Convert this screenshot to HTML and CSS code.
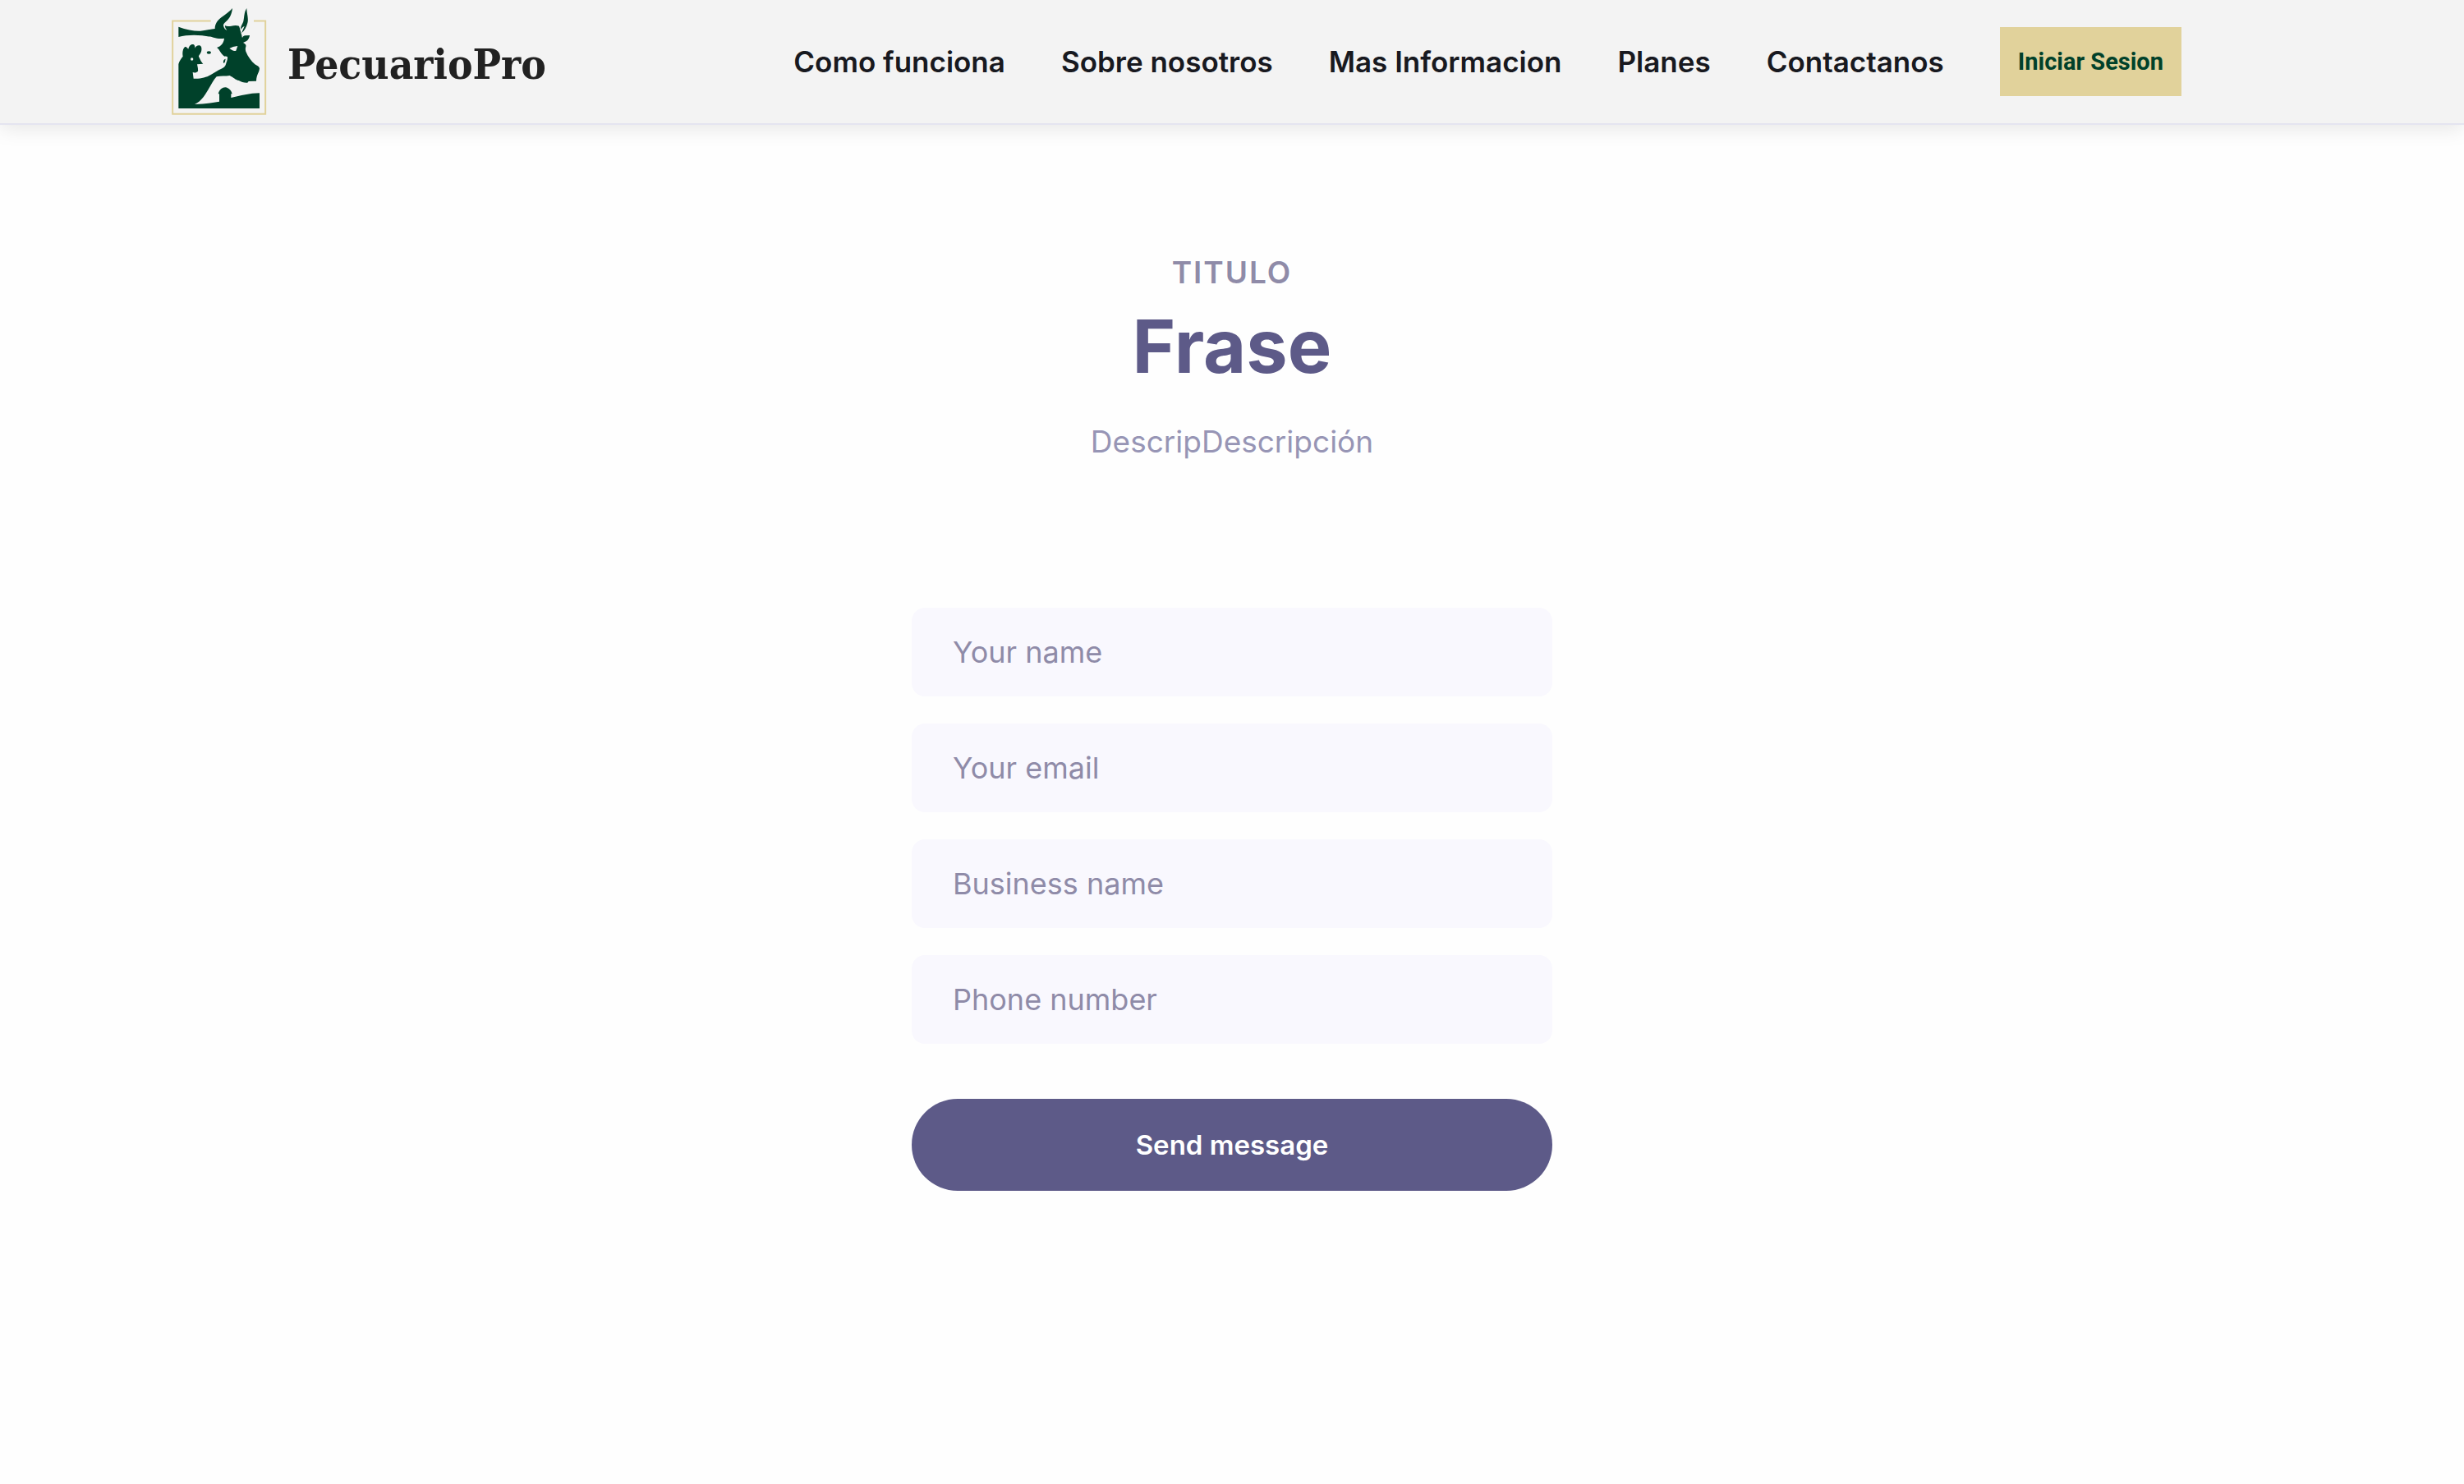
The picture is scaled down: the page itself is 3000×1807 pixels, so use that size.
FILE: index.html
```html
<!DOCTYPE html>
<html lang="es">
<head>
<meta charset="utf-8">
<meta name="viewport" content="width=device-width, initial-scale=1">
<title>PecuarioPro</title>
<link rel="stylesheet" href="styles.css">
</head>
<body>
<header class="header">
  <a class="brand" href="#">
    <svg class="brand-mark" viewBox="54 24 354 402" aria-hidden="true">
      <path d="M200 76.500H60.500V416.500H399.500V76.500H357" fill="none" stroke="#e1d29b" stroke-width="6"/>
      <g fill="#00412a">
        <path d="M82 98C112 109 140 114 162 113C184 112 200 106 215 105C215 88 223 76 238 64C254 52 268 43 279 30C276 55 268 68 257 77C249 84 245 89 246 94C248 104 254 110 259 110C255 105 251 99 252 93C258 97 267 97 275 95C285 92 296 92 303 95C307 105 309 117 312 126C314 130 313 134 315 138C318 132 322 129 327 130L342 129C341 139 335 150 324 153L318 156C325 160 330 163 328 170C326 176 326 182 328 188C336 208 348 223 361 235C370 240 377 243 378 250C377 265 367 272 366 296L338 297L334 302C323 303 310 299 302 294C290 292 283 283 269 276C254 279 237 276 221 280C206 297 196 320 181 343C171 359 157 375 141 381C173 380 205 376 231 371V343H227C231 327 242 319 253 319C266 321 275 330 278 343H274V357C309 350 342 340 378 340V396H82V234C85 222 93 212 98 206C95 194 98 176 106 171C111 169 115 177 118 179C120 167 128 160 136 162C142 164 142 171 142 176C145 168 154 163 162 167C168 171 167 186 163 193C160 200 155 203 156 207C161 214 162 224 172 233L150 235C152 245 154 252 153 260C148 266 140 266 134 264L137 287C161 289 185 282 199 274L224 259C238 250 250 250 255 235C257 226 262 218 261 208C258 206 255 205 250 206C242 200 238 195 235 190C231 183 228 178 222 174C237 169 247 158 249 140C235 143 222 140 210 137C166 126 119 125 82 135Z"/>
        <path d="M331 30C331 49 339 70 334 84C330 100 323 112 312 121C316 111 320 103 323 95C316 99 312 103 310 108C307 97 316 89 319 78C323 60 321 45 331 30Z"/>
        <ellipse cx="193" cy="192" rx="8" ry="5"/>
        <path d="M247 231C244 225 247 216 254 215C252 222 253 228 247 231Z"/>
      </g>
      <path d="M268 177C277 173 285 169 298 168L292 185C283 188 276 182 268 177Z" fill="#f3f3f3"/>
      <circle cx="131" cy="216" r="5" fill="#f3f3f3"/>
    </svg>
    <span class="brand-name">PecuarioPro</span>
  </a>
  <nav class="nav" aria-label="Principal">
    <a class="nav-link" href="#">Como funciona</a>
    <a class="nav-link" href="#">Sobre nosotros</a>
    <a class="nav-link" href="#">Mas Informacion</a>
    <a class="nav-link" href="#">Planes</a>
    <a class="nav-link" href="#">Contactanos</a>
    <button class="login" type="button">Iniciar Sesion</button>
  </nav>
</header>
<main class="contact">
  <p class="eyebrow">TITULO</p>
  <h1 class="title">Frase</h1>
  <p class="lead">DescripDescripción</p>
  <form class="form">
    <input class="field" type="text" name="name" placeholder="Your name" aria-label="Your name">
    <input class="field" type="email" name="email" placeholder="Your email" aria-label="Your email">
    <input class="field" type="text" name="business" placeholder="Business name" aria-label="Business name">
    <input class="field" type="tel" name="phone" placeholder="Phone number" aria-label="Phone number">
    <button class="send" type="submit">Send message</button>
  </form>
</main>
</body>
</html>
```
FILE: styles.css
```css
* {
  box-sizing: border-box;
}

body {
  margin: 0;
  background: #fefefe;
  font-family: Inter, "Open Sans", sans-serif;
}

.header {
  display: flex;
  align-items: center;
  justify-content: space-between;
  padding: 8px 344px 8px 208px;
  background: #f3f3f3;
  border-bottom: 2px solid #e4e4f0;
  box-shadow: 0 4px 24px rgba(0, 0, 0, 0.1);
}

.brand {
  display: flex;
  align-items: center;
  gap: 24px;
  color: #212121;
  text-decoration: none;
}

.brand-mark {
  display: block;
  width: 118px;
  height: 134px;
}

.brand-name {
  padding-top: 6px;
  font: bold 51px/64px "DejaVu Serif Condensed", "DejaVu Serif", serif;
}

.nav {
  display: flex;
  align-items: center;
  gap: 68px;
}

.nav-link {
  color: #18191f;
  font-size: 35px;
  font-weight: 600;
  line-height: 48px;
  text-decoration: none;
  white-space: nowrap;
}

.login {
  padding: 22px;
  border: 0;
  background: #e1d29b;
  color: #00412a;
  font: bold 29px/40px Roboto, sans-serif;
  white-space: nowrap;
}

.contact {
  display: flex;
  flex-direction: column;
  align-items: center;
  padding: 156px 32px;
  text-align: center;
}

.eyebrow {
  margin: 0;
  color: #8f8ba8;
  font-size: 37px;
  font-weight: 600;
  line-height: 48px;
  letter-spacing: 2px;
}

.title {
  margin: 10px 0 30px;
  color: #5d5a88;
  font-size: 90px;
  font-weight: 700;
  line-height: 112px;
}

.lead {
  margin: 0;
  color: #9795b5;
  font-size: 37px;
  line-height: 60px;
}

.form {
  display: flex;
  flex-direction: column;
  gap: 33px;
  width: 100%;
  max-width: 780px;
  margin-top: 172px;
}

.field {
  width: 100%;
  height: 108px;
  padding: 0 50px;
  border: 0;
  border-radius: 16px;
  background: #f9f8fe;
  color: #5d5a88;
  font: 400 36px/60px Inter, sans-serif;
}

.field::placeholder {
  color: #8f8ba8;
  opacity: 1;
}

.send {
  height: 112px;
  margin-top: 34px;
  border: 0;
  border-radius: 56px;
  background: #5d5a88;
  color: #fff;
  font: 600 33px/48px Inter, sans-serif;
}
```
